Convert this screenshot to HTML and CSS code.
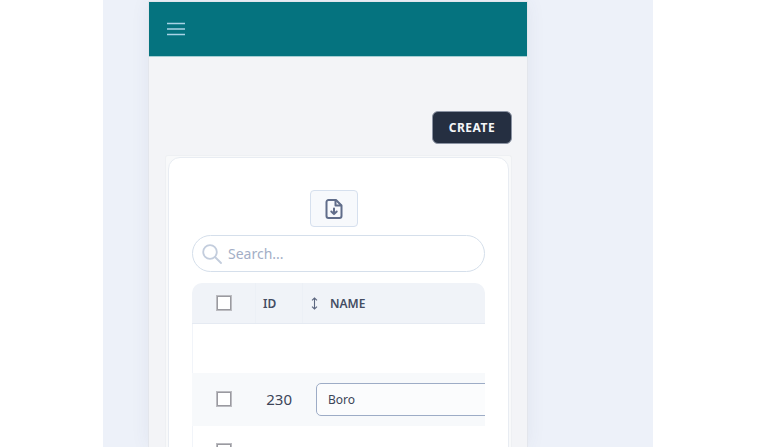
FILE: index.html
```html
<!DOCTYPE html>
<html lang="en">
<head>
    <meta charset="UTF-8">
    <title>Items</title>
    <link rel="stylesheet" href="styles.css">
</head>
<body>
    <div class="app">
        <div class="panel">
            <header class="topbar">
                <svg class="menu-icon" width="18" height="14" viewBox="0 0 18 14">
                    <path d="M0 1.5h18M0 7h18M0 12.5h18" stroke="#a9d3e6" stroke-width="1.7" fill="none"/>
                </svg>
            </header>
            <main class="content">
                <div class="actions">
                    <button class="create-btn">CREATE</button>
                </div>
                <div class="card-frame">
                    <div class="card">
                        <div class="toolbar">
                            <button class="export-btn">
                                <svg width="18" height="20" viewBox="0 0 18 20" fill="none" stroke="#606d8a" stroke-width="2" stroke-linejoin="round" stroke-linecap="round">
                                    <path d="M3.5 1h7.5l5.5 5.5v10.5a2 2 0 0 1-2 2h-11a2 2 0 0 1-2-2v-14a2 2 0 0 1 2-2z"/>
                                    <path d="M10.5 1.5v5h5.5"/>
                                    <path d="M9 9.5v5.5M6.3 12.5l2.7 2.6 2.7-2.6"/>
                                </svg>
                            </button>
                        </div>
                        <div class="search">
                            <svg width="20" height="20" viewBox="0 0 20 20" fill="none" stroke="#c3cddd" stroke-width="1.8" stroke-linecap="round">
                                <circle cx="8" cy="8" r="6.8"/>
                                <path d="M13 13l6 6"/>
                            </svg>
                            <span class="search-text">Search...</span>
                        </div>
                        <div class="table">
                            <div class="row head-row">
                                <div class="cell check-cell"><span class="checkbox"></span></div>
                                <div class="cell id-cell head-label">ID</div>
                                <div class="cell name-cell head-label">
                                    <svg class="sort" width="7" height="13" viewBox="0 0 7 13" fill="none" stroke="#5b667f" stroke-width="1.1">
                                        <path d="M3.5 1v11M1 3.4l2.5-2.4 2.5 2.4M1 9.6l2.5 2.4 2.5-2.4"/>
                                    </svg>NAME
                                </div>
                            </div>
                            <div class="row empty-row"></div>
                            <div class="row edit-row">
                                <div class="cell check-cell"><span class="checkbox"></span></div>
                                <div class="cell id-cell num">230</div>
                                <div class="cell name-cell"><div class="name-input">Boro</div></div>
                            </div>
                            <div class="row plain-row">
                                <div class="cell check-cell"><span class="checkbox"></span></div>
                                <div class="cell id-cell num">234</div>
                                <div class="cell name-cell"><span class="name-text">Boro</span></div>
                            </div>
                        </div>
                    </div>
                </div>
            </main>
        </div>
    </div>
</body>
</html>
```

FILE: styles.css
```css
html, body {
    margin: 0;
    padding: 0;
    height: 447px;
    overflow: hidden;
    background-color: #fff;
    font-family: "Noto Sans", sans-serif;
    color: #3c4558;
}

.app {
    width: 504px;
    height: 445px;
    margin-left: 103px;
    padding: 2px 0 0 46px;
    background-color: #edf1f9;
}

.panel {
    width: 378px;
    height: 445px;
    background-color: #f3f4f7;
    box-shadow: 0 0 0 1px #e3e6ec, 0 0 18px rgba(70, 80, 110, 0.08);
    overflow: hidden;
}

.topbar {
    height: 54px;
    display: flex;
    align-items: center;
    padding-left: 18px;
    background-color: #05737f;
    border-bottom: 1px solid #a5cfd3;
}

.content {
    padding: 54px 15px 0 16px;
}

.actions {
    display: flex;
    justify-content: flex-end;
    margin-bottom: 11px;
}

.create-btn {
    width: 80px;
    height: 33px;
    padding: 0;
    border: 1px solid #8b93a3;
    border-radius: 6px;
    background-color: #252f41;
    color: #f4f6f8;
    font-family: inherit;
    font-size: 12px;
    font-weight: 700;
    letter-spacing: 0.5px;
}

.card-frame {
    width: 347px;
    padding: 1px 2px 0;
    box-sizing: border-box;
    background-color: #f8f9fa;
    border: 1px solid #eef0f3;
    border-bottom: 0;
    border-radius: 3px 3px 0 0;
}

.card {
    height: 300px;
    padding: 32px 23px 0 23px;
    background-color: #fff;
    border: 1px solid #e8ecf2;
    border-radius: 12px 12px 0 0;
}

.toolbar {
    display: flex;
    justify-content: center;
    padding-right: 10px;
    margin-bottom: 8px;
}

.export-btn {
    display: flex;
    align-items: center;
    justify-content: center;
    width: 48px;
    height: 37px;
    padding: 0;
    background-color: #f7f9fc;
    border: 1px solid #d6e0ee;
    border-radius: 4px;
}

.search {
    display: flex;
    align-items: center;
    gap: 6px;
    height: 37px;
    padding-left: 9px;
    box-sizing: border-box;
    border: 1px solid #d5dfeb;
    border-radius: 19px;
    background-color: #fff;
    margin-bottom: 11px;
}

.search-text {
    font-size: 14px;
    color: #a3aec6;
}

.table {
    width: 293px;
    overflow: hidden;
    border-radius: 10px 10px 0 0;
}

.row {
    display: flex;
    align-items: center;
}

.head-row {
    height: 41px;
    box-sizing: border-box;
    background-color: #f0f3f8;
    border-bottom: 1px solid #e5eaf2;
}

.empty-row {
    height: 49px;
    background-color: #fff;
    box-shadow: inset 1px 0 #f1f4f9;
}

.edit-row {
    height: 53px;
    padding-bottom: 1px;
    box-sizing: border-box;
    background-color: #f7f9fb;
}

.plain-row {
    height: 50px;
    background-color: #fff;
    box-shadow: inset 1px 0 #f1f4f9;
}

.cell {
    flex: none;
    display: flex;
    align-items: center;
}

.check-cell {
    width: 64px;
    height: 100%;
    padding-left: 25px;
    box-sizing: border-box;
}

.id-cell {
    width: 47px;
    height: 100%;
}

.name-cell {
    width: 300px;
    padding-left: 13px;
    box-sizing: border-box;
}

.checkbox {
    width: 12px;
    height: 12px;
    border: 1px solid #9a9aa0;
    outline: 1px solid #bcbcc1;
    background-color: #fff;
}

.head-label {
    font-size: 12px;
    font-weight: 600;
    color: #444d63;
}

.head-row .check-cell {
    border-right: 1px solid #ecf0f6;
}

.head-row .id-cell {
    padding-left: 7px;
    box-sizing: border-box;
    border-right: 1px solid #ecf0f6;
}

.head-row .name-cell {
    padding-left: 8px;
}

.sort {
    margin-right: 12px;
}

.num {
    justify-content: flex-end;
    padding-right: 11px;
    box-sizing: border-box;
    font-size: 15px;
    color: #3c4558;
}

.name-input {
    width: 100%;
    height: 33px;
    padding-left: 11px;
    display: flex;
    align-items: center;
    box-sizing: border-box;
    background-color: #fbfcfd;
    border: 1px solid #9dacc6;
    border-radius: 5px;
    font-size: 12px;
    color: #3c4558;
}

.name-text {
    font-size: 15px;
    color: #3c4558;
}
```
